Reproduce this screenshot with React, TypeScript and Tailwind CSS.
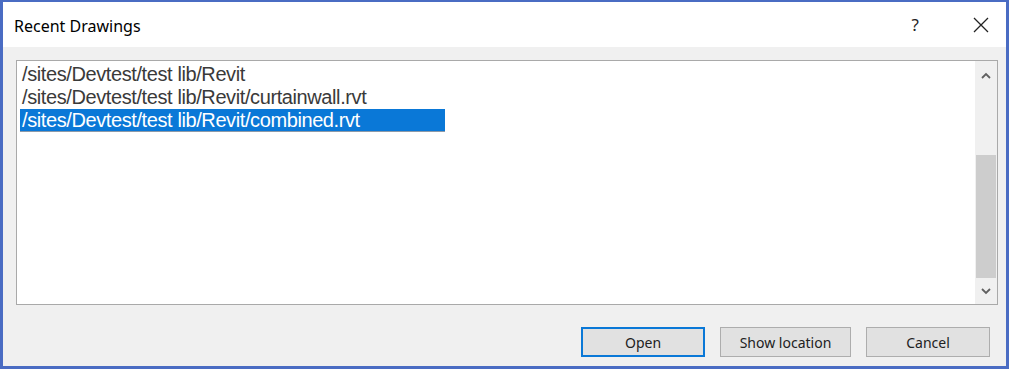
export default function App() {
    const items = [
        "/sites/Devtest/test lib/Revit",
        "/sites/Devtest/test lib/Revit/curtainwall.rvt",
        "/sites/Devtest/test lib/Revit/combined.rvt",
    ];
    const selected = 2;

    return (
        <div className="w-[1011px] h-[371px] bg-white">
            <div className="w-[1009px] h-[369px] border-x-[3px] border-t-2 border-b-[3px] border-[#4a6cc3] flex flex-col">
                {/* title bar */}
                <div className="h-[45px] bg-white flex items-center pl-[11px] pr-[17px] shrink-0">
                    <span className="text-[16px] text-black font-['Noto_Sans',sans-serif] mt-[2px]">Recent Drawings</span>
                    <span className="ml-auto mr-[54px] text-[17px] text-[#222] font-['Noto_Sans',sans-serif]">?</span>
                    <svg width="16" height="16" viewBox="0 0 16 16" className="mt-[1px]">
                        <path d="M1 1 L15 15 M15 1 L1 15" stroke="#222" strokeWidth="1.3" fill="none" />
                    </svg>
                </div>

                {/* body */}
                <div className="flex-1 bg-[#f0f0f0] pl-[13px] pr-[8px] pt-[13px] flex flex-col">
                    <div className="h-[245px] border border-[#a9a9a9] bg-white flex">
                        <div className="flex-1 pt-[2px] pl-[3px] font-['Liberation_Sans',Arial,sans-serif] text-[20px] tracking-[-0.4px]">
                            {items.map((item, i) => (
                                <div
                                    key={item}
                                    className={
                                        i === selected
                                            ? "h-[23px] leading-[23px] w-[425px] px-[2px] bg-[#0a78d7] text-white border-b border-[#8d9aa8]"
                                            : "h-[23px] leading-[23px] px-[2px] text-[#3a3a3a]"
                                    }
                                >
                                    {item}
                                </div>
                            ))}
                        </div>
                        {/* scrollbar */}
                        <div className="w-[22px] bg-[#f0f0f0] flex flex-col">
                            <div className="h-[24px] flex items-center justify-center pt-[4px]">
                                <svg width="10" height="7" viewBox="0 0 10 7">
                                    <path d="M1 6 L5 2 L9 6" stroke="#606060" strokeWidth="1.8" fill="none" />
                                </svg>
                            </div>
                            <div className="h-[70px]" />
                            <div className="h-[123px] mx-[1px] bg-[#cdcdcd]" />
                            <div className="flex-1 flex items-center justify-center">
                                <svg width="10" height="7" viewBox="0 0 10 7">
                                    <path d="M1 1 L5 5 L9 1" stroke="#606060" strokeWidth="1.8" fill="none" />
                                </svg>
                            </div>
                        </div>
                    </div>

                    <div className="mt-[22px] flex justify-end gap-[15px] pr-[8px] font-['Noto_Sans',sans-serif] text-[14px] text-[#222]">
                        <button className="w-[124px] h-[30px] bg-[#e1e1e1] border-2 border-[#0a78d7] flex items-center justify-center">
                            Open
                        </button>
                        <button className="w-[131px] h-[30px] bg-[#e1e1e1] border border-[#adadad] flex items-center justify-center">
                            Show location
                        </button>
                        <button className="w-[124px] h-[30px] bg-[#e1e1e1] border border-[#adadad] flex items-center justify-center">
                            Cancel
                        </button>
                    </div>
                </div>
            </div>
        </div>
    );
}
